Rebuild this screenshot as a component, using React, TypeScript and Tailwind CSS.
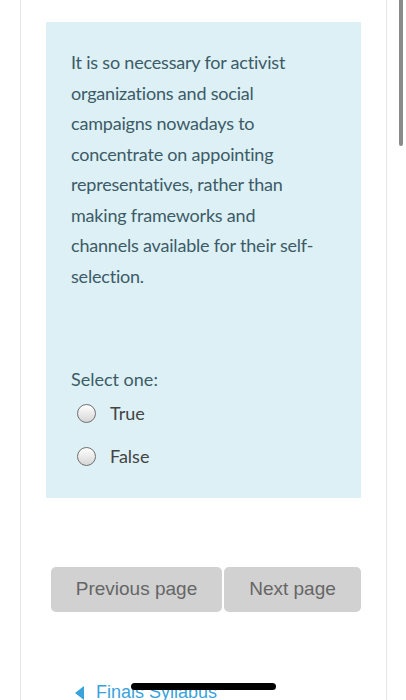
import React from 'react'

const quiz = {
  question:
    'It is so necessary for activist organizations and social campaigns nowadays to concentrate on appointing representatives, rather than making frameworks and channels available for their self-selection.',
  options: ['True', 'False'],
}

function Radio() {
  return (
    <span className="w-[19px] h-[19px] rounded-full border border-[#6f6f6f] bg-gradient-to-b from-white to-[#d6d6d6] shrink-0" />
  )
}

export default function App() {
  return (
    <div className="relative w-[406px] h-[700px] overflow-hidden bg-white font-['Lato',sans-serif]">
      <div className="ml-[20px] w-[367px] h-full border-l border-r border-[#e6e6e6] pt-[22px] px-[25px]">
        {/* Question box */}
        <div className="bg-[#dcf0f6] pl-[25px] pr-[34px] pt-[25px] pb-[20px] text-[#3d5b66]">
          <p className="text-[18px] leading-[30.5px] tracking-[-0.2px]">{quiz.question}</p>

          <p className="mt-[73px] text-[18px] leading-[30px]">Select one:</p>
          <div className="-mt-[2px] flex flex-col">
            {quiz.options.map(opt => (
              <label key={opt} className="flex items-center h-[43px] pl-[6px] gap-[14px] text-[18px] text-[#444]">
                <Radio />
                <span>{opt}</span>
              </label>
            ))}
          </div>
        </div>

        {/* Navigation */}
        <div className="mt-[69px] ml-[5px] flex gap-[2px] font-['Liberation_Sans',sans-serif]">
          <button className="w-[171px] h-[45px] rounded-[5px] bg-[#d1d1d1] text-[19px] text-[#666]">
            Previous page
          </button>
          <button className="w-[137px] h-[45px] rounded-[5px] bg-[#d1d1d1] text-[19px] text-[#666]">
            Next page
          </button>
        </div>

        <div className="mt-[67px] ml-[29px] flex items-center gap-[12px] text-[#3aa3dc] font-['Liberation_Sans',sans-serif] text-[18px]">
          <span className="w-0 h-0 border-y-[7px] border-y-transparent border-r-[9px] border-r-[#3aa3dc]" />
          <span>Finals Syllabus</span>
        </div>
      </div>

      {/* scrollbar */}
      <div className="absolute right-[3px] top-0 w-[4px] h-[146px] rounded-b-sm bg-[#8a8a8a]" />
      {/* home indicator */}
      <div className="absolute left-[131px] top-[683px] w-[145px] h-[7px] rounded-full bg-black" />
    </div>
  )
}
